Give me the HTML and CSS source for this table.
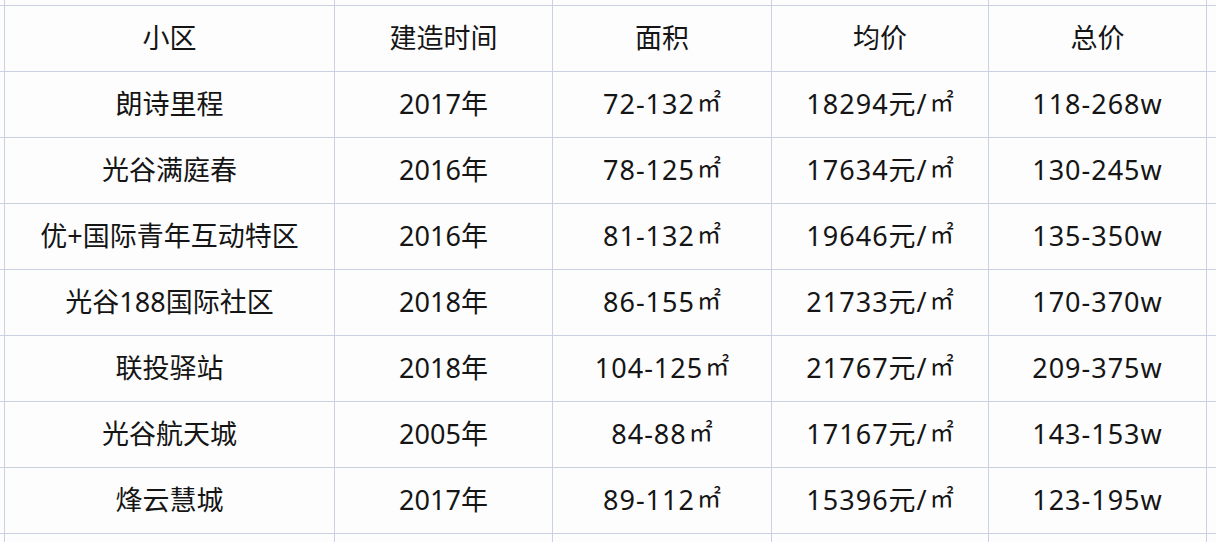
FILE: index.html
```html
<!DOCTYPE html>
<html lang="zh-CN">
<head>
<meta charset="utf-8">
<title>小区价格表</title>
<link rel="stylesheet" href="styles.css">
</head>
<body>
<div class="sheet">
  <div class="c"></div><div class="c"></div><div class="c"></div><div class="c"></div><div class="c"></div><div class="c"></div><div class="c"></div>

  <div class="c"></div>
  <div class="c">小区</div><div class="c">建造时间</div><div class="c">面积</div><div class="c">均价</div><div class="c">总价</div>
  <div class="c"></div>

  <div class="c"></div>
  <div class="c">朗诗里程</div><div class="c">2017年</div><div class="c n">72-132<span class="u">㎡</span></div><div class="c n">18294元/<span class="u">㎡</span></div><div class="c n">118-268w</div>
  <div class="c"></div>

  <div class="c"></div>
  <div class="c">光谷满庭春</div><div class="c">2016年</div><div class="c n">78-125<span class="u">㎡</span></div><div class="c n">17634元/<span class="u">㎡</span></div><div class="c n">130-245w</div>
  <div class="c"></div>

  <div class="c"></div>
  <div class="c">优+国际青年互动特区</div><div class="c">2016年</div><div class="c n">81-132<span class="u">㎡</span></div><div class="c n">19646元/<span class="u">㎡</span></div><div class="c n">135-350w</div>
  <div class="c"></div>

  <div class="c"></div>
  <div class="c">光谷188国际社区</div><div class="c">2018年</div><div class="c n">86-155<span class="u">㎡</span></div><div class="c n">21733元/<span class="u">㎡</span></div><div class="c n">170-370w</div>
  <div class="c"></div>

  <div class="c"></div>
  <div class="c">联投驿站</div><div class="c">2018年</div><div class="c n">104-125<span class="u">㎡</span></div><div class="c n">21767元/<span class="u">㎡</span></div><div class="c n">209-375w</div>
  <div class="c"></div>

  <div class="c"></div>
  <div class="c">光谷航天城</div><div class="c">2005年</div><div class="c n">84-88<span class="u">㎡</span></div><div class="c n">17167元/<span class="u">㎡</span></div><div class="c n">143-153w</div>
  <div class="c"></div>

  <div class="c"></div>
  <div class="c">烽云慧城</div><div class="c">2017年</div><div class="c n">89-112<span class="u">㎡</span></div><div class="c n">15396元/<span class="u">㎡</span></div><div class="c n">123-195w</div>
  <div class="c"></div>

  <div class="c"></div><div class="c"></div><div class="c"></div><div class="c"></div><div class="c"></div><div class="c"></div><div class="c"></div>
</div>
</body>
</html>
```

FILE: styles.css
```css
html, body {
  margin: 0;
  padding: 0;
  height: 100%;
  overflow: hidden;
  background: #fdfdfe;
}

.sheet {
  display: grid;
  grid-template-columns: 4px 329px 217px 218px 216px 217px 1fr;
  grid-template-rows: 5px repeat(8, 65px) 1fr;
  gap: 1px;
  width: 100%;
  height: 100%;
  background: #c9d1e2;
  font-family: "Noto Sans", "Noto Sans CJK SC", sans-serif;
  font-size: 27px;
  color: #151515;
}

.c {
  background: #fdfdfe;
  display: flex;
  align-items: center;
  justify-content: center;
  white-space: nowrap;
  line-height: 1;
  padding-bottom: 2px;
}

.n {
  letter-spacing: 1px;
}

.u {
  font-family: "Noto Sans CJK SC", sans-serif;
  font-size: 24px;
  letter-spacing: 0;
  position: relative;
  top: -3px;
  margin-left: 2px;
}
```
